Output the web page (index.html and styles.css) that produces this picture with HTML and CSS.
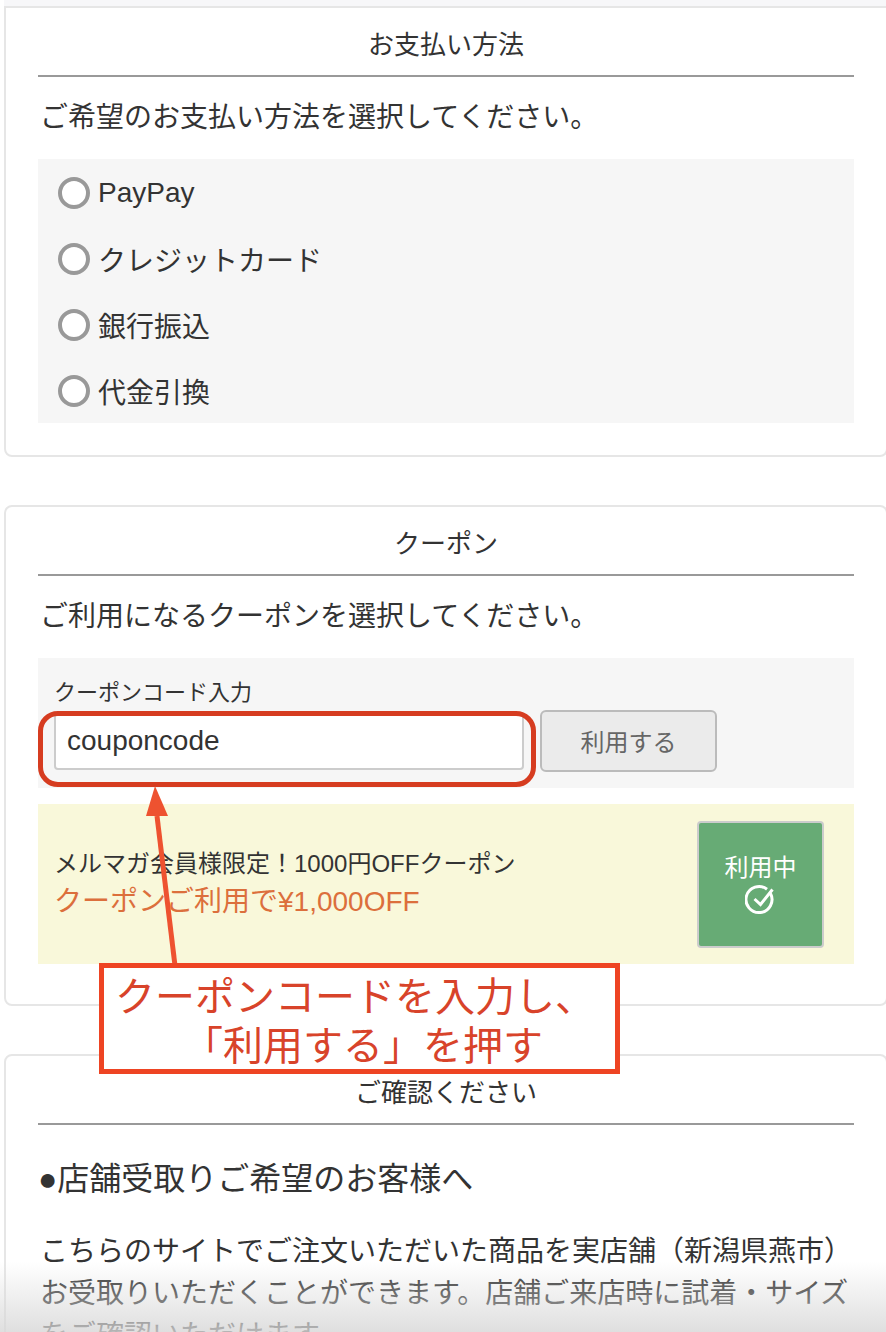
FILE: index.html
```html
<!DOCTYPE html>
<html lang="ja">
<head>
	<meta charset="UTF-8">
	<title>お支払い方法</title>
	<link rel="stylesheet" href="styles.css">
</head>
<body>

<div class="wrap">
	<!-- お支払い方法 -->
	<section class="card card_pay">
		<h2 class="card_ttl">お支払い方法</h2>
		<p class="lead">ご希望のお支払い方法を選択してください。</p>
		<ul class="pay_list">
			<li><i class="radio"></i>PayPay</li>
			<li><i class="radio"></i>クレジットカード</li>
			<li><i class="radio"></i>銀行振込</li>
			<li><i class="radio"></i>代金引換</li>
		</ul>
	</section>

	<!-- クーポン -->
	<section class="card card_cpn">
		<h2 class="card_ttl">クーポン</h2>
		<p class="lead">ご利用になるクーポンを選択してください。</p>
		<div class="cpn_form">
			<div class="cpn_lbl">クーポンコード入力</div>
			<div class="cpn_row">
				<div class="cpn_input">couponcode</div>
				<div class="cpn_btn">利用する</div>
			</div>
		</div>
		<div class="cpn_item">
			<div class="cpn_info">
				<p class="cpn_name">メルマガ会員様限定！1000円OFFクーポン</p>
				<p class="cpn_off">クーポンご利用で¥1,000OFF</p>
			</div>
			<div class="cpn_use">
				利用中
				<svg class="cpn_check" width="32" height="32" viewBox="0 0 32 32" fill="none" stroke="#fff" stroke-width="3">
					<path d="M25.5 9.5a13 13 0 1 1-3.5-4.2"/>
					<path d="M9.5 15l6 5.5L27.5 5.5"/>
				</svg>
			</div>
		</div>
	</section>

	<!-- ご確認ください -->
	<section class="card card_note">
		<h2 class="card_ttl">ご確認ください</h2>
		<h3 class="note_ttl">●店舗受取りご希望のお客様へ</h3>
		<p class="note_txt">こちらのサイトでご注文いただいた商品を実店舗（新潟県燕市）お受取りいただくことができます。店舗ご来店時に試着・サイズをご確認いただけます。</p>
	</section>
</div>

<!-- 説明用の赤い枠と矢印 -->
<div class="mark_ring"></div>
<svg class="mark_arrow" width="40" height="190" viewBox="0 0 40 190">
	<path d="M30 188L11 30" stroke="#ee5230" stroke-width="5"/>
	<path d="M8 0L21 30L-1 30Z" fill="#ee5230" transform="translate(1 0)"/>
</svg>
<div class="mark_box">クーポンコードを入力し、<br><span class="mark_line2">「利用する」を押す</span></div>
<div class="fade"></div>

</body>
</html>
```

FILE: styles.css
```css
*{margin:0; padding:0; box-sizing:border-box;}
html,body{ height:1332px; overflow:hidden; }
body{ position:relative; background:#fff; color:#333; font-family:"Liberation Sans","Noto Sans CJK JP",sans-serif; font-size:28px; }
ul{ list-style:none; }

.wrap{ width:884px; margin-left:4px; padding-top:6px; border-top:0; background:linear-gradient(#f7f7f9 6px,#fff 6px); }

/*カード*/
.card{ background:#fff; border:2px solid #e6e6e6; border-radius:8px; padding:0 32px; margin-bottom:48px; }
.card_pay{ height:451px; border-top-left-radius:0; border-top-right-radius:0; }
.card_cpn{ height:501px; }
.card_note{ height:400px; }
.card_ttl{ height:69px; padding-top:18px; border-bottom:2px solid #999; font-size:26px; line-height:38px; font-weight:normal; text-align:center; }
.lead{ height:82px; line-height:82px; padding-left:2px; }

/*お支払い方法*/
.pay_list{ height:264px; background:#f6f6f6; padding:1px 20px; }
.pay_list li{ display:flex; align-items:center; height:66px; }
.radio{ width:32px; height:32px; margin-right:8px; background:#fff; border:4px solid #999; border-radius:50%; }

/*クーポン*/
.cpn_form{ height:130px; background:#f6f6f6; padding:18px 16px 0; }
.cpn_lbl{ height:34px; font-size:22px; line-height:34px; }
.cpn_row{ display:flex; align-items:center; }
.cpn_input{ width:470px; height:58px; padding-left:11px; background:#fff; border:2px solid #ccc; border-radius:4px; line-height:54px; }
.cpn_btn{ width:177px; height:62px; margin-left:16px; background:#ebebeb; border:2px solid #bbb; border-radius:6px; color:#666; font-size:24px; line-height:62px; text-align:center; }
.cpn_item{ display:flex; align-items:center; justify-content:space-between; height:160px; margin-top:16px; padding:0 30px 0 16px; background:#f9f8da; }
.cpn_name{ font-size:24px; line-height:36px; }
.cpn_off{ color:#dc6f3c; line-height:40px; }
.cpn_use{ display:flex; flex-direction:column; align-items:center; justify-content:center; width:127px; height:127px; background:#67ab75; border:2px solid #ccc; border-radius:4px; color:#fff; font-size:24px; line-height:32px; }
.cpn_check{ display:block; }

/*ご確認ください*/
.note_ttl{ padding:30px 0 0 0; font-size:32px; line-height:48px; font-weight:normal; }
.note_txt{ margin-top:28px; padding-left:2px; line-height:42px; }

/*赤い枠*/
.mark_ring{ position:absolute; top:711px; left:38px; width:498px; height:76px; border:5px solid #d63c20; border-radius:20px; }
.mark_arrow{ position:absolute; top:786px; left:146px; overflow:visible; }
.mark_box{ position:absolute; top:963px; left:99px; width:521px; height:111px; padding:5px 0 0 11px; background:#fff; border:5px solid #ee4423; color:#d8432a; font-size:40px; line-height:49px; white-space:nowrap; }
.mark_line2{ padding-left:68px; }

/*下のグラデーション*/
.fade{ position:absolute; left:0; bottom:0; width:100%; height:70px; background:linear-gradient(rgba(215,215,215,0),rgba(215,215,215,.8)); }
```
